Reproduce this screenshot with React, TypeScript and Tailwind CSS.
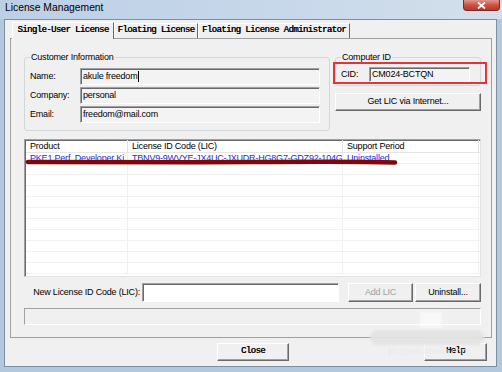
import React from "react";

const sunken =
  "border border-t-[#a0a0a0] border-l-[#a0a0a0] border-r-white border-b-white shadow-[inset_1px_1px_0_#696969]";
const raised =
  "border border-t-white border-l-white border-r-[#696969] border-b-[#696969] shadow-[inset_-1px_-1px_0_#a0a0a0]";
const mono =
  "font-['Liberation_Mono',monospace] text-[9px] tracking-[-0.6px] font-normal [text-shadow:0.35px_0_0_#000]";

function Field({ value, cursor, h }: { value: string; cursor?: boolean; h: string }) {
  return (
    <div className={`${sunken} ${h} bg-[#f3f3f3] flex items-center pl-[2px]`}>
      <span>{value}</span>
      {cursor && <span className="w-px h-[11px] bg-black ml-px" />}
    </div>
  );
}

export default function App() {
  const rows = Array.from({ length: 11 });
  return (
    <div className="w-[502px] h-[372px] relative overflow-hidden bg-[#b4c8dd] flex flex-col font-['Liberation_Sans',Arial,sans-serif] text-[9px] tracking-[-0.2px] text-black">
      {/* Title bar */}
      <div className="h-[19px] flex items-start justify-between bg-gradient-to-r from-[#bccfe5] via-[#c6d7ea] to-[#d3dfeb]">
        <span className="pl-[5px] text-[10.3px] tracking-normal leading-[16px]">License Management</span>
        <div className="mr-[2px] w-[37px] h-[11px] rounded-b-[4px] bg-gradient-to-b from-[#e0958a] via-[#cc5244] to-[#b5382b] border border-t-0 border-[#7e2a22] flex items-center justify-center">
          <svg width="9" height="7" viewBox="0 0 9 7">
            <path d="M1 0.5 L8 6.5 M8 0.5 L1 6.5" stroke="white" strokeWidth="1.8" />
          </svg>
        </div>
      </div>

      {/* Client */}
      <div className="ml-[4px] mr-[5px] mb-[5px] flex-1 bg-[#f0f0f0] border border-[#7b8ea3] flex flex-col">
        {/* Tabs */}
        <div className="h-[18px] flex items-end pl-[7px] relative z-10">
          <div className={`h-[17px] w-[102px] -mb-px bg-[#f0f0f0] border border-b-0 border-t-white border-l-white border-r-[#696969] flex items-center justify-center ${mono}`}>
            Single-User License
          </div>
          <div className={`h-[15px] w-[84px] border border-b-0 border-t-white border-l-white border-r-[#696969] flex items-center justify-center ${mono}`}>
            Floating License
          </div>
          <div className={`h-[15px] w-[152px] border border-b-0 border-t-white border-l-white border-r-[#696969] flex items-center justify-center ${mono}`}>
            Floating License Administrator
          </div>
        </div>

        {/* Panel */}
        <div className="ml-[5px] mr-[4px] h-[300px] border border-[#a0a0a0] flex flex-col pt-[13px] pl-[13px] pr-[10px]">
          <div className="flex gap-[5px]">
            {/* Customer Information */}
            <fieldset className="w-[306px] border border-[#d3d6da] rounded-[3px] pl-[5px] pr-[9px] pt-[5px] pb-[7px]">
              <legend className="px-px leading-[11px]">Customer Information</legend>
              <div className="flex flex-col gap-[2px]">
                <div className="flex items-center">
                  <span className="w-[50px]">Name:</span>
                  <div className="w-[240px]">
                    <Field value="akule freedom" cursor h="h-[17px]" />
                  </div>
                </div>
                <div className="flex items-center">
                  <span className="w-[50px]">Company:</span>
                  <div className="w-[240px]">
                    <Field value="personal" h="h-[17px]" />
                  </div>
                </div>
                <div className="flex items-center">
                  <span className="w-[50px]">Email:</span>
                  <div className="w-[240px]">
                    <Field value="freedom@mail.com" h="h-[17px]" />
                  </div>
                </div>
              </div>
            </fieldset>

            {/* Right column */}
            <div className="w-[146px] flex flex-col relative">
              <fieldset className="border border-[#d3d6da] rounded-[3px] pl-[5px] pr-[10px] pt-[4px] pb-[3px]">
                <legend className="px-px leading-[11px]">Computer ID</legend>
                <div className="flex items-center">
                  <span className="w-[28px]">CID:</span>
                  <div className="w-[101px]">
                    <Field value="CM024-BCTQN" h="h-[15px]" />
                  </div>
                </div>
              </fieldset>
              <div className="absolute left-[-2px] top-[10px] w-[154px] h-[22px] border-2 border-[#e8323a]" />
              <div className={`${raised} mt-[7px] h-[18px] bg-[#f0f0f0] flex items-center justify-center`}>
                Get LIC via Internet...
              </div>
            </div>
          </div>

          {/* Table */}
          <div className="mt-[8px] h-[138px] relative bg-white overflow-hidden flex flex-col border border-t-[#a0a0a0] border-l-[#a0a0a0] border-r-[#e3e3e3] border-b-[#e3e3e3] shadow-[inset_1px_1px_0_#696969]">
            <div className="h-[13px] shrink-0 flex border-b border-[#e5e5e5] ml-px">
              <div className="w-[102px] pl-[4px] border-r border-[#e0e0e0] leading-[12px]">Product</div>
              <div className="w-[215px] pl-[4px] border-r border-[#e0e0e0] leading-[12px]">License ID Code (LIC)</div>
              <div className="w-[136px] pl-[4px] border-r border-[#e0e0e0] leading-[12px]">Support Period</div>
            </div>
            {rows.map((_, i) => (
              <div key={i} className="h-[11px] shrink-0 flex border-b border-[#f0f0f0] ml-px text-[#2b2bd8]">
                <div className="w-[102px] pl-[4px] border-r border-[#f0f0f0] leading-[10px] whitespace-nowrap overflow-hidden">
                  {i === 0 ? "PKE1 Perf. Developer Ki..." : ""}
                </div>
                <div className="w-[215px] pl-[4px] border-r border-[#f0f0f0] leading-[10px] whitespace-nowrap overflow-hidden">
                  {i === 0 ? "TBNV9-9WVYE-JX4UC-JXUDR-HG8G7-GDZ92-104GU..." : ""}
                </div>
                <div className="w-[136px] pl-[4px] border-r border-[#f0f0f0] leading-[10px] whitespace-nowrap overflow-hidden">
                  {i === 0 ? "Uninstalled" : ""}
                </div>
              </div>
            ))}
            <svg className="absolute left-0 top-[18px]" width="380" height="8" viewBox="0 0 380 8">
              <path d="M3 4 C 60 3.5, 150 4.5, 230 4 S 340 3.5, 370 4.5" stroke="#7c0808" strokeWidth="4.5" strokeLinecap="round" fill="none" />
            </svg>
          </div>

          {/* New LIC row */}
          <div className="mt-[6px] h-[19px] flex items-center pl-[8px]">
            <span className="w-[110px] text-right pr-[2px]">New License ID Code (LIC):</span>
            <div className={`${sunken} w-[197px] h-[19px] bg-white`} />
            <div className={`${raised} ml-[9px] w-[65px] h-[19px] bg-[#f0f0f0] flex items-center justify-center text-[#a0a0a0]`}>
              Add LIC
            </div>
            <div className={`${raised} ml-[2px] w-[66px] h-[19px] bg-[#f0f0f0] flex items-center justify-center`}>
              Uninstall...
            </div>
          </div>

          {/* Status bar */}
          <div className="mt-[6px] h-[17px] border border-t-[#a0a0a0] border-l-[#a0a0a0] border-r-white border-b-white bg-[#f0f0f0]" />
        </div>

        {/* Bottom buttons */}
        <div className="mt-[5px] flex">
          <div className={`${raised} ml-[212px] w-[72px] h-[18px] bg-[#f0f0f0] flex items-center justify-center ${mono}`}>
            Close
          </div>
          <div className={`${raised} ml-[135px] w-[63px] h-[18px] bg-[#f0f0f0] flex items-center justify-center ${mono}`}>
            Help
          </div>
        </div>
      </div>

      {/* Watermark overlays */}
      <div className="absolute left-[420px] top-[312px] w-[22px] h-[16px] bg-white/50 blur-[1px]" />
      <div className="absolute left-[370px] top-[330px] w-[114px] h-[15px] rounded-full bg-[#e3e3e3]/95 blur-[1px]" />
      <div className="absolute left-[388px] top-[343px] text-[11px] leading-[14px] text-[#e9e9e9]/90 font-['Liberation_Serif',serif] tracking-normal">
        jingyan.baidu.com
      </div>
    </div>
  );
}
